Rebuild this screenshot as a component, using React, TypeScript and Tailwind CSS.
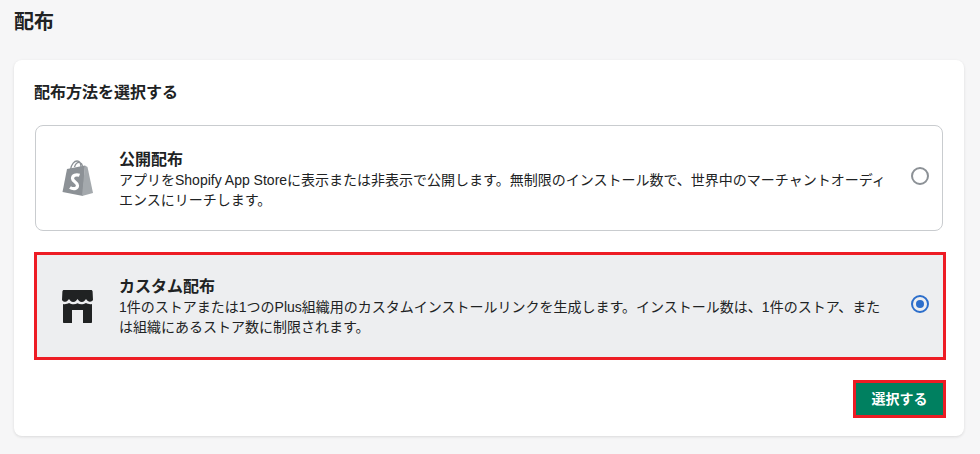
const font = { fontFamily: '"Liberation Sans", "Noto Sans CJK JP", sans-serif' }

function ShopifyIcon() {
  return (
    <svg width="31" height="36" viewBox="0 0 31 36" className="shrink-0">
      <path fill="#8c9196" d="M0.500 32 5 9 23 5.500 21 36Z" />
      <path fill="#a4a9ad" d="M23 5.500 25.500 7 31 33 20 36Z" />
      <path
        fill="none"
        stroke="#8c9196"
        strokeWidth="1.300"
        d="M8.500 9.500C9.500 4 12.500 1 15 1c2.500 0 4 2.500 4 6.500M12.500 7C13.500 4 15.500 2 18 2.500c1.500.5 2.300 2 2.500 3.500"
      />
      <path
        fill="none"
        stroke="#ffffff"
        strokeWidth="3.200"
        d="M17.500 15.300C14 14 10.500 15.500 10.500 18.500c0 3 5 3.500 5 7 0 3.500-4.500 4-7.500 2"
      />
    </svg>
  )
}

function StoreIcon() {
  return (
    <svg width="31" height="33" viewBox="0 0 31 33" className="shrink-0">
      <path
        fill="#202223"
        d="M2 0h27c1 0 1.500.6 1.600 1.500L31 10c-1 1.500-2.500 2-4 1.500-1-.3-2-1-3-2.500-1 1.500-2 3-4.200 3S16.500 10.500 15.500 9c-1 1.500-2 3-4.300 3S8 10.500 7 9c-1 1.500-2 2.500-3.500 2.700C2 12 .8 11.300 0 10l.4-8.500C.5.600 1 0 2 0Z"
      />
      <path
        fill="#202223"
        d="M1 14c2 .5 4.500 0 6-1 2.500 1.500 6 1.800 8.500.3 2.500 1.500 6 1.200 8.500-.3 1.500 1 4 1.500 6 1v18c0 .6-.4 1-1 1h-8V20H10v13H2c-.6 0-1-.4-1-1V14Z"
      />
    </svg>
  )
}

function Radio({ checked }: { checked: boolean }) {
  return (
    <span
      className={`mb-[4px] flex h-[18px] w-[18px] shrink-0 items-center justify-center rounded-full border-2 ${
        checked ? 'border-[#2c6ecb]' : 'border-[#8c9196]'
      }`}
    >
      {checked && <span className="h-2 w-2 rounded-full bg-[#2c6ecb]" />}
    </span>
  )
}

export default function App() {
  return (
    <div className="h-[454px] w-[980px] overflow-hidden bg-[#f6f6f7] text-[#202223]" style={font}>
      <h1 className="ml-[14px] pt-[9px] text-[20px] leading-[27px] font-semibold">配布</h1>

      <div className="mt-[24px] ml-[14px] h-[376px] w-[950px] rounded-lg bg-white px-5 pt-[21px] shadow-[0_1px_3px_rgba(23,24,24,0.12)]">
        <h2 className="text-[16px] leading-6 font-semibold">配布方法を選択する</h2>

        <div className="mt-[20px] ml-px flex h-[106px] w-[908px] items-center rounded-lg border border-[#c9cccf] bg-white pr-[13px] pl-[26px]">
          <ShopifyIcon />
          <div className="mt-[3px] ml-[26px] flex-1">
            <div className="text-[16px] leading-[20px] font-semibold">公開配布</div>
            <p className="text-[14px] leading-[20px] whitespace-nowrap text-[#202223]">
              アプリをShopify App Storeに表示または非表示で公開します。無制限のインストール数で、世界中のマーチャントオーディ
              <br />
              エンスにリーチします。
            </p>
          </div>
          <Radio checked={false} />
        </div>

        <div className="mt-[21px] flex h-[108px] w-[912px] items-center border-[3px] border-[#ed1c24] bg-[#edeef0] pr-[14px] pl-[25px]">
          <StoreIcon />
          <div className="mt-[2px] ml-[26px] flex-1">
            <div className="text-[16px] leading-[20px] font-semibold">カスタム配布</div>
            <p className="text-[14px] leading-[20px] whitespace-nowrap text-[#202223]">
              1件のストアまたは1つのPlus組織用のカスタムインストールリンクを生成します。インストール数は、1件のストア、また
              <br />
              は組織にあるストア数に制限されます。
            </p>
          </div>
          <Radio checked />
        </div>

        <div className="mt-[20px] flex w-[912px] justify-end">
          <button className="h-[38px] w-[93px] border-[3px] border-[#ed1c24] bg-[#008060] text-[14px] font-semibold text-white">
            選択する
          </button>
        </div>
      </div>
    </div>
  )
}
